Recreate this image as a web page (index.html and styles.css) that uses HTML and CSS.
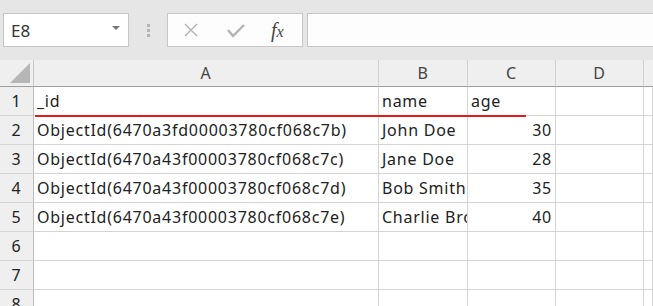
FILE: index.html
```html
<!DOCTYPE html>
<html>

<head>
    <title>Sheet</title>
    <link rel="stylesheet" href="styles.css">
</head>

<body>
    <div id="app">
        <div class="formula-bar">
            <div class="name-box">
                <span>E8</span>
                <span class="drop-arrow"></span>
            </div>
            <div class="grip">
                <span></span><span></span><span></span>
            </div>
            <div class="fx-buttons">
                <svg class="fx-icon" width="16" height="16" viewBox="0 0 16 16">
                    <path d="M2 2 L14 14 M14 2 L2 14" stroke="#b3b3b3" stroke-width="1.4" fill="none" />
                </svg>
                <svg class="fx-icon" width="18" height="16" viewBox="0 0 18 16">
                    <path d="M1 8 L6 14 L17 3" stroke="#b3b3b3" stroke-width="2.4" fill="none" />
                </svg>
                <span class="fx-label"><i>f</i><i>x</i></span>
            </div>
            <div class="formula-input"></div>
        </div>

        <div class="sheet">
            <div class="corner"><span class="tri"></span></div>
            <div class="col-head">A</div>
            <div class="col-head">B</div>
            <div class="col-head">C</div>
            <div class="col-head">D</div>
            <div class="col-head last"></div>

            <div class="row-head">1</div>
            <div class="cell">_id</div>
            <div class="cell">name</div>
            <div class="cell">age</div>
            <div class="cell"></div>
            <div class="cell"></div>

            <div class="row-head">2</div>
            <div class="cell">ObjectId(6470a3fd00003780cf068c7b)</div>
            <div class="cell">John Doe</div>
            <div class="cell num">30</div>
            <div class="cell"></div>
            <div class="cell"></div>

            <div class="row-head">3</div>
            <div class="cell">ObjectId(6470a43f00003780cf068c7c)</div>
            <div class="cell">Jane Doe</div>
            <div class="cell num">28</div>
            <div class="cell"></div>
            <div class="cell"></div>

            <div class="row-head">4</div>
            <div class="cell">ObjectId(6470a43f00003780cf068c7d)</div>
            <div class="cell">Bob Smith</div>
            <div class="cell num">35</div>
            <div class="cell"></div>
            <div class="cell"></div>

            <div class="row-head">5</div>
            <div class="cell">ObjectId(6470a43f00003780cf068c7e)</div>
            <div class="cell">Charlie Brown</div>
            <div class="cell num">40</div>
            <div class="cell"></div>
            <div class="cell"></div>

            <div class="row-head">6</div>
            <div class="cell"></div>
            <div class="cell"></div>
            <div class="cell"></div>
            <div class="cell"></div>
            <div class="cell"></div>

            <div class="row-head">7</div>
            <div class="cell"></div>
            <div class="cell"></div>
            <div class="cell"></div>
            <div class="cell"></div>
            <div class="cell"></div>

            <div class="row-head">8</div>
            <div class="cell"></div>
            <div class="cell"></div>
            <div class="cell"></div>
            <div class="cell"></div>
            <div class="cell"></div>

            <!-- red underline drawn over row 1 -->
            <div class="underline"></div>
        </div>
    </div>
</body>

</html>
```

FILE: styles.css
```css
body {
    margin: 0;
    font-family: "Noto Sans", "Noto Sans CJK KR", sans-serif;
    color: #222;
}

#app {
    width: 653px;
    height: 306px;
    overflow: hidden;
    background: #fff;
}

/* top bar */
.formula-bar {
    height: 60px;
    background-color: #e6e6e6;
    display: flex;
    align-items: center;
}

.name-box {
    margin-left: 3px;
    width: 126px;
    height: 34px;
    box-sizing: border-box;
    border: 1px solid #c6c6c6;
    background: #fff;
    display: flex;
    align-items: center;
    justify-content: space-between;
    padding: 0 8px 0 7px;
    font-size: 17px;
    color: #333;
}

.drop-arrow {
    width: 0;
    height: 0;
    border-left: 4px solid transparent;
    border-right: 4px solid transparent;
    border-top: 4px solid #777;
    margin-bottom: 4px;
}

.grip {
    width: 38px;
    display: flex;
    flex-direction: column;
    align-items: center;
    gap: 2px;
}

.grip span {
    width: 3px;
    height: 3px;
    background: #b5b5b5;
}

.fx-buttons {
    width: 136px;
    height: 34px;
    box-sizing: border-box;
    border: 1px solid #c6c6c6;
    background: #fdfdfd;
    display: flex;
    align-items: center;
    padding-left: 15px;
    gap: 28px;
}

.fx-label {
    font-family: "Liberation Serif", serif;
    font-size: 20px;
    color: #444;
    margin-left: -2px;
}

.fx-label i:last-child {
    font-size: 16px;
}

.formula-input {
    margin-left: 4px;
    flex: 1;
    height: 34px;
    box-sizing: border-box;
    border: 1px solid #c6c6c6;
    border-right: none;
    background: #fdfdfd;
}

/* grid */
.sheet {
    position: relative;
    display: grid;
    grid-template-columns: 34px 345px 89px 88px 88px 1fr;
    grid-template-rows: 27px repeat(8, 29px);
    font-size: 16px;
    letter-spacing: 0.75px;
}

.corner,
.col-head,
.row-head {
    background-color: #efefef;
    box-sizing: border-box;
    color: #444;
}

.corner {
    border-right: 1px solid #c8c8c8;
    border-bottom: 1px solid #9e9e9e;
    position: relative;
}

.tri {
    position: absolute;
    right: 3px;
    bottom: 3px;
    width: 0;
    height: 0;
    border-left: 20px solid transparent;
    border-bottom: 20px solid #b6b6b6;
}

.col-head {
    border-right: 1px solid #d0d0d0;
    border-bottom: 1px solid #9e9e9e;
    display: flex;
    align-items: center;
    justify-content: center;
}

.col-head.last {
    border-right: none;
}

.row-head {
    border-right: 1px solid #bdbdbd;
    border-bottom: 1px solid #d4d4d4;
    display: flex;
    align-items: center;
    justify-content: center;
    color: #222;
}

.cell {
    box-sizing: border-box;
    border-right: 1px solid #d4d4d4;
    border-bottom: 1px solid #d4d4d4;
    padding: 0 3px;
    display: flex;
    align-items: center;
    white-space: nowrap;
    overflow: hidden;
}

.cell.num {
    justify-content: flex-end;
    padding-right: 3px;
}

.underline {
    position: absolute;
    left: 35px;
    top: 55px;
    width: 491px;
    height: 2px;
    background-color: #e81919;
}
```
